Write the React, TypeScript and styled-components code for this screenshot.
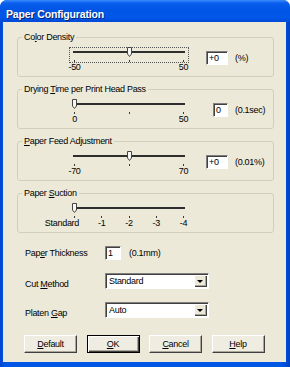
import React from "react";
import styled, { createGlobalStyle } from "styled-components";

const GlobalStyle = createGlobalStyle`
  html, body {
    margin: 0;
    padding: 0;
  }
  body {
    font-family: "Liberation Sans", Arial, sans-serif;
    font-size: 9px;
    letter-spacing: -0.3px;
    color: #000;
  }
`;

const Window = styled.div`
  width: 290px;
  height: 367px;
  display: flex;
  flex-direction: column;
  border-radius: 7px 7px 0 0;
  overflow: hidden;
  background: #0052e0;
`;

const TitleBar = styled.div`
  height: 22px;
  box-sizing: border-box;
  padding: 8px 0 0 6px;
  line-height: 12px;
  font-size: 10.5px;
  font-weight: bold;
  letter-spacing: -0.15px;
  color: #fff;
  text-shadow: 1px 1px #0a1f70;
  background: linear-gradient(180deg, #3a8cfb 0%, #0a5eee 14%, #0055e5 45%, #0057e9 80%, #0049d6 100%);
`;

const Frame = styled.div`
  flex: 1;
  display: flex;
  padding: 0 4px 5px 3px;
  background: linear-gradient(90deg, #0047cf 0%, #0057e6 2%, #0057e6 97%, #0040c4 100%);
`;

const Body = styled.div`
  flex: 1;
  display: flex;
  flex-direction: column;
  background: #ece9d8;
  padding: 10px 12px 0 14px;
`;

const Groups = styled.div`
  display: flex;
  flex-direction: column;
  gap: 7px;
`;

const Group = styled.fieldset`
  margin: 0;
  padding: 0;
  min-width: 0;
  border: 1px solid #d0d0bf;
  border-radius: 3px;
`;

const Legend = styled.legend`
  margin-left: 4px;
  padding: 0 2px;
  line-height: 10px;
`;

const GroupRow = styled.div`
  display: flex;
  align-items: flex-start;
  padding: 5px 0 4px 51px;
`;

const SliderBox = styled.div`
  width: 120px;
  display: flex;
  flex-direction: column;
`;

const Control = styled.div<{ $focused?: boolean }>`
  height: 16px;
  box-sizing: border-box;
  outline: ${(p) => (p.$focused ? "1px dotted #555" : "none")};
  outline-offset: -1px;
`;

const TrackBox = styled.div`
  position: relative;
  height: 10px;
  display: flex;
  align-items: center;
  padding: 0 4px;
`;

const TrackLine = styled.div`
  flex: 1;
  height: 2px;
  background: #2e2e2e;
`;

const Thumb = styled.svg`
  position: absolute;
  top: 0;
  width: 5px;
  height: 10px;
`;

const TickRow = styled.div`
  display: flex;
  justify-content: space-between;
  padding: 0 5px;
  margin-top: 3px;
  height: 3px;
`;

const Tick = styled.div`
  width: 1px;
  height: 2px;
  background: #3a3a3a;
`;

const LabelRow = styled.div`
  display: flex;
  justify-content: space-between;
  padding: 0 5px;
  height: 9px;
  line-height: 9px;
`;

const LabelCol = styled.div<{ $end?: boolean }>`
  width: 1px;
  display: flex;
  flex-direction: column;
  align-items: ${(p) => (p.$end ? "flex-end" : "center")};
  white-space: nowrap;
`;

const LabelText = styled.span<{ $end?: boolean }>`
  margin-right: ${(p) => (p.$end ? "-4px" : "0")};
`;

const ValueWrap = styled.div`
  display: flex;
  align-items: center;
  margin-top: 4px;
`;

const EditSlot = styled.div`
  width: 39px;
  display: flex;
  justify-content: flex-end;
`;

const Edit = styled.div<{ $w: number }>`
  width: ${(p) => p.$w}px;
  height: 14px;
  box-sizing: border-box;
  background: #fff;
  border: 1px solid;
  border-color: #808080 #fff #fff #808080;
  box-shadow: inset 1px 1px #404040;
  padding-left: 2px;
  line-height: 12px;
`;

const Unit = styled.span<{ $gap: number }>`
  margin-left: ${(p) => p.$gap}px;
  white-space: nowrap;
`;

const Form = styled.div`
  display: grid;
  grid-template-columns: 80px auto;
  grid-template-rows: 14px 16px 16px;
  row-gap: 13px;
  align-items: center;
  justify-content: start;
  margin: 13px 0 0 8px;
`;

const FieldLabel = styled.span<{ $low?: boolean }>`
  align-self: ${(p) => (p.$low ? "end" : "center")};
  line-height: 9px;
  white-space: nowrap;
`;

const Inline = styled.div`
  display: flex;
  align-items: center;
`;

const Combo = styled.div`
  width: 104px;
  height: 16px;
  box-sizing: border-box;
  display: flex;
  background: #fff;
  border: 1px solid;
  border-color: #808080 #fff #fff #808080;
  box-shadow: inset 1px 1px #404040;
`;

const ComboText = styled.span`
  flex: 1;
  padding-left: 3px;
  line-height: 14px;
`;

const DropBtn = styled.div`
  width: 13px;
  margin: 1px 1px 1px 0;
  display: flex;
  align-items: center;
  justify-content: center;
  background: #ece9d8;
  box-shadow: inset 1px 1px #fff, inset -1px -1px #404040, inset -2px -2px #aca899;
`;

const Arrow = styled.div`
  width: 0;
  height: 0;
  margin-right: 1px;
  border-left: 3px solid transparent;
  border-right: 3px solid transparent;
  border-top: 3px solid #000;
`;

const ButtonRow = styled.div`
  display: flex;
  gap: 9.5px;
  margin: 17px 0 0 7px;
`;

const Button = styled.button<{ $primary?: boolean }>`
  width: 53px;
  height: 18px;
  padding: 0;
  font-family: inherit;
  font-size: 9px;
  letter-spacing: inherit;
  color: #000;
  background: #efede2;
  border: 1px solid;
  border-color: ${(p) => (p.$primary ? "#000" : "#fff #404040 #404040 #fff")};
  box-shadow: ${(p) =>
    p.$primary
      ? "inset 1px 1px #fff, inset -1px -1px #404040, inset -2px -2px #aca899"
      : "inset -1px -1px #aca899"};
`;

const U = styled.span`
  text-decoration: underline;
`;

interface SliderGroup {
  title: React.ReactNode;
  ticks: string[];
  pos: number;
  focused?: boolean;
  value?: string;
  editW?: number;
  unit?: string;
}

const groups: SliderGroup[] = [
  { title: <>Co<U>l</U>or Density</>, ticks: ["-50", "", "50"], pos: 0.5, focused: true, value: "+0", editW: 22, unit: "(%)" },
  { title: <>Drying <U>T</U>ime per Print Head Pass</>, ticks: ["0", "", "50"], pos: 0, value: "0", editW: 15, unit: "(0.1sec)" },
  { title: <><U>P</U>aper Feed Adjustment</>, ticks: ["-70", "", "70"], pos: 0.5, value: "+0", editW: 22, unit: "(0.01%)" },
  { title: <>Paper <U>S</U>uction</>, ticks: ["Standard", "-1", "-2", "-3", "-4"], pos: 0 },
];

function Slider({ g }: { g: SliderGroup }) {
  return (
    <SliderBox>
      <Control $focused={g.focused}>
        <TrackBox>
          <TrackLine />
          <Thumb viewBox="0 0 5 10" style={{ left: `calc(3px + ${g.pos} * (100% - 11px))` }}>
            <path d="M0.5 0.5 H4.5 V7 L2.5 9.5 L0.5 7 Z" fill="#f6f6f3" stroke="#454545" strokeWidth="1" />
          </Thumb>
        </TrackBox>
        <TickRow>
          {g.ticks.map((_, i) => (
            <Tick key={i} />
          ))}
        </TickRow>
      </Control>
      <LabelRow>
        {g.ticks.map((t, i) => {
          const end = t.length > 4 && i === 0;
          return (
            <LabelCol key={i} $end={end}>
              <LabelText $end={end}>{t}</LabelText>
            </LabelCol>
          );
        })}
      </LabelRow>
    </SliderBox>
  );
}

function DropDown({ text }: { text: string }) {
  return (
    <Combo>
      <ComboText>{text}</ComboText>
      <DropBtn>
        <Arrow />
      </DropBtn>
    </Combo>
  );
}

export default function App() {
  return (
    <>
      <GlobalStyle />
      <Window>
        <TitleBar>Paper Configuration</TitleBar>
        <Frame>
          <Body>
            <Groups>
              {groups.map((g, i) => (
                <Group key={i}>
                  <Legend>{g.title}</Legend>
                  <GroupRow>
                    <Slider g={g} />
                    {g.value !== undefined && (
                      <ValueWrap>
                        <EditSlot>
                          <Edit $w={g.editW ?? 22}>{g.value}</Edit>
                        </EditSlot>
                        <Unit $gap={7}>{g.unit}</Unit>
                      </ValueWrap>
                    )}
                  </GroupRow>
                </Group>
              ))}
            </Groups>

            <Form>
              <FieldLabel>
                Pap<U>e</U>r Thickness
              </FieldLabel>
              <Inline>
                <Edit $w={16}>1</Edit>
                <Unit $gap={8}>(0.1mm)</Unit>
              </Inline>

              <FieldLabel $low>
                Cut <U>M</U>ethod
              </FieldLabel>
              <DropDown text="Standard" />

              <FieldLabel $low>
                Platen <U>G</U>ap
              </FieldLabel>
              <DropDown text="Auto" />
            </Form>

            <ButtonRow>
              <Button>
                <U>D</U>efault
              </Button>
              <Button $primary>
                <U>O</U>K
              </Button>
              <Button>
                <U>C</U>ancel
              </Button>
              <Button>
                <U>H</U>elp
              </Button>
            </ButtonRow>
          </Body>
        </Frame>
      </Window>
    </>
  );
}
